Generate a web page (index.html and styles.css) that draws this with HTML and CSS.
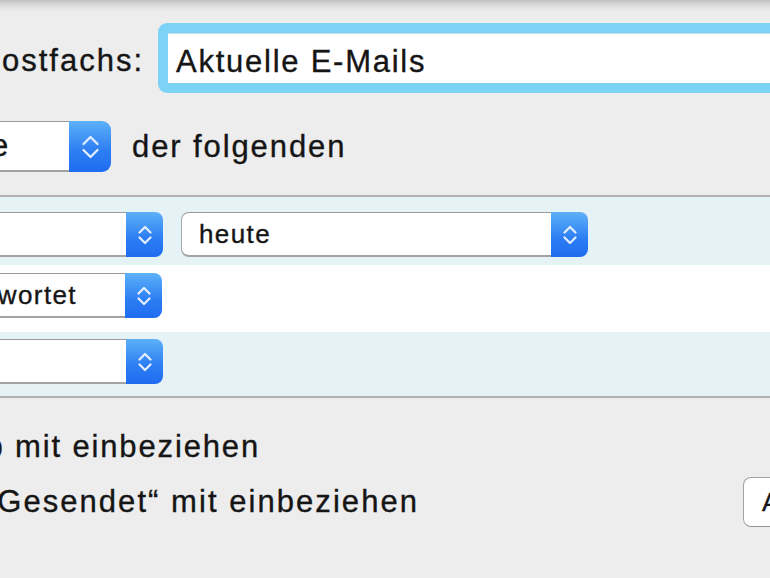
FILE: index.html
```html
<!DOCTYPE html>
<html lang="de">
<head>
<meta charset="utf-8">
<title>Intelligentes Postfach</title>
<link rel="stylesheet" href="styles.css">
</head>
<body>
<main class="sheet">
  <div class="name-row">
    <div class="clip label-clip"><span>Name des intelligenten Postfachs:</span></div>
    <div class="focus-ring"><div class="textfield">Aktuelle E-Mails</div></div>
  </div>

  <div class="match-row">
    <div class="popup popup-lg">
      <div class="popup-value clip cut value-lg"><span>alle</span></div>
      <div class="stepper stepper-lg">
        <svg width="17" height="28" viewBox="0 0 17 28"><polyline points="1.5,11 8.5,4 15.5,11"/><polyline points="1.5,17 8.5,24 15.5,17"/></svg>
      </div>
    </div>
    <span class="match-text">der folgenden</span>
  </div>

  <section class="conditions">
    <div class="cond-row tinted row-a">
      <div class="popup">
        <div class="popup-value clip cut value-hidden"><span>ist</span></div>
        <div class="stepper">
          <svg width="14" height="24" viewBox="0 0 14 24"><polyline points="1.5,9.5 7,4 12.5,9.5"/><polyline points="1.5,14.5 7,20 12.5,14.5"/></svg>
        </div>
      </div>
      <div class="popup">
        <div class="popup-value value-wide"><span>heute</span></div>
        <div class="stepper">
          <svg width="14" height="24" viewBox="0 0 14 24"><polyline points="1.5,9.5 7,4 12.5,9.5"/><polyline points="1.5,14.5 7,20 12.5,14.5"/></svg>
        </div>
      </div>
    </div>
    <div class="cond-row row-b">
      <div class="popup">
        <div class="popup-value clip cut value-wortet"><span>Unbeantwortet</span></div>
        <div class="stepper">
          <svg width="14" height="24" viewBox="0 0 14 24"><polyline points="1.5,9.5 7,4 12.5,9.5"/><polyline points="1.5,14.5 7,20 12.5,14.5"/></svg>
        </div>
      </div>
    </div>
    <div class="cond-row tinted row-c">
      <div class="popup">
        <div class="popup-value clip cut value-hidden"><span>Nicht gelöscht</span></div>
        <div class="stepper">
          <svg width="14" height="24" viewBox="0 0 14 24"><polyline points="1.5,9.5 7,4 12.5,9.5"/><polyline points="1.5,14.5 7,20 12.5,14.5"/></svg>
        </div>
      </div>
    </div>
  </section>

  <div class="option option-trash">
    <div class="clip trash-clip"><span>Nachrichten aus dem Papierkorb mit einbeziehen</span></div>
  </div>
  <div class="option option-sent">
    <div class="clip sent-clip"><span>Nachrichten aus „Gesendet“ mit einbeziehen</span></div>
    <button class="button" type="button">Abbrechen</button>
  </div>
</main>
</body>
</html>
```

FILE: styles.css
```css
html, body {
  margin: 0;
  height: 100%;
  overflow: hidden;
}

body {
  background-color: #ededed;
  background-image: linear-gradient(#c2c2c2 0, #d6d6d6 4px, #e8e8e8 9px, #ededed 13px);
  background-size: 100% 14px;
  background-repeat: no-repeat;
  font-family: "Liberation Sans", Arial, sans-serif;
  color: #151515;
  -webkit-text-stroke: 0.35px #151515;
}

.sheet {
  width: 770px;
  padding-top: 23px;
}

.clip {
  display: flex;
  justify-content: flex-end;
  overflow: hidden;
  white-space: nowrap;
}

.clip > span {
  flex-shrink: 0;
}

/* name row */
.name-row {
  display: flex;
  align-items: center;
  height: 70px;
}

.label-clip {
  width: 144px;
  flex-shrink: 0;
  font-size: 31px;
  letter-spacing: 2px;
  padding-top: 6px;
}

.focus-ring {
  flex: 0 0 640px;
  margin-left: 14px;
  box-sizing: border-box;
  height: 70px;
  padding: 10px 0 10px 10px;
  background: #7dd3f6;
  border-radius: 9px;
}

.textfield {
  box-sizing: border-box;
  height: 50px;
  background: #fff;
  border-top: 1px solid #c9dbe2;
  padding: 6px 0 0 8px;
  display: flex;
  align-items: center;
  font-size: 31px;
  letter-spacing: 1.75px;
}

/* match row */
.match-row {
  display: flex;
  align-items: center;
  height: 51px;
  margin-top: 28px;
}

.match-text {
  margin-left: 21px;
  font-size: 31px;
  letter-spacing: 1.9px;
}

/* popups */
.popup {
  display: flex;
  height: 45px;
  flex-shrink: 0;
}

.popup-lg {
  height: 51px;
}

.popup-value {
  box-sizing: border-box;
  height: 100%;
  display: flex;
  align-items: center;
  background: #fff;
  border: 1px solid #a9a9a9;
  border-top-color: #9a9a9a;
  border-bottom: 2px solid #a3a3a3;
  border-right: none;
  border-radius: 8px 0 0 8px;
  font-size: 26px;
  letter-spacing: 1.4px;
}

.cut {
  margin-left: -20px;
  width: 145px;
}

.value-lg {
  width: 89px;
  padding-right: 59px;
  font-size: 31px;
  letter-spacing: 1.85px;
}

.value-hidden {
  padding-right: 145px;
}

.value-wortet {
  padding-right: 48px;
}

.value-wide {
  width: 370px;
  padding-left: 17px;
  justify-content: flex-start;
}

.stepper {
  width: 37px;
  display: flex;
  align-items: center;
  justify-content: center;
  background: linear-gradient(#5db1f8, #2c7df3 60%, #1f6cf0);
  border-radius: 0 8px 8px 0;
}

.stepper-lg {
  width: 42px;
  border-radius: 0 9px 9px 0;
}

.stepper polyline {
  fill: none;
  stroke: #e4f0ff;
  stroke-width: 2.2;
  stroke-linecap: round;
  stroke-linejoin: round;
}

/* conditions */
.conditions {
  margin-top: 23px;
  border-top: 2px solid #b2b2b2;
  border-bottom: 2px solid #b2b2b2;
  background: #fff;
}

.cond-row {
  display: flex;
  align-items: flex-start;
  gap: 18px;
  box-sizing: border-box;
}

.tinted {
  background: #e5f2f6;
}

.row-a {
  height: 68px;
  padding-top: 15px;
}

.row-b {
  height: 67px;
  padding-top: 8px;
}

.row-c {
  height: 64px;
  padding-top: 7px;
}

/* options */
.option {
  display: flex;
  align-items: center;
  font-size: 31px;
  letter-spacing: 1.85px;
  line-height: 36px;
}

.option-trash {
  margin-top: 31px;
}

.trash-clip {
  width: 260px;
  flex-shrink: 0;
}

.option-sent {
  margin-top: 12px;
  height: 50px;
}

.sent-clip {
  width: 419px;
  flex-shrink: 0;
  letter-spacing: 2.05px;
}

.button {
  margin-left: auto;
  margin-right: -90px;
  width: 117px;
  height: 50px;
  flex-shrink: 0;
  box-sizing: border-box;
  background: #fff;
  border: 1.5px solid #a2a2a2;
  border-bottom-color: #959595;
  border-radius: 8px;
  padding: 0 0 0 18px;
  text-align: left;
  font-family: "Liberation Sans", Arial, sans-serif;
  font-size: 26px;
  letter-spacing: 1.4px;
  color: #151515;
  -webkit-text-stroke: 0.35px #151515;
}
```
